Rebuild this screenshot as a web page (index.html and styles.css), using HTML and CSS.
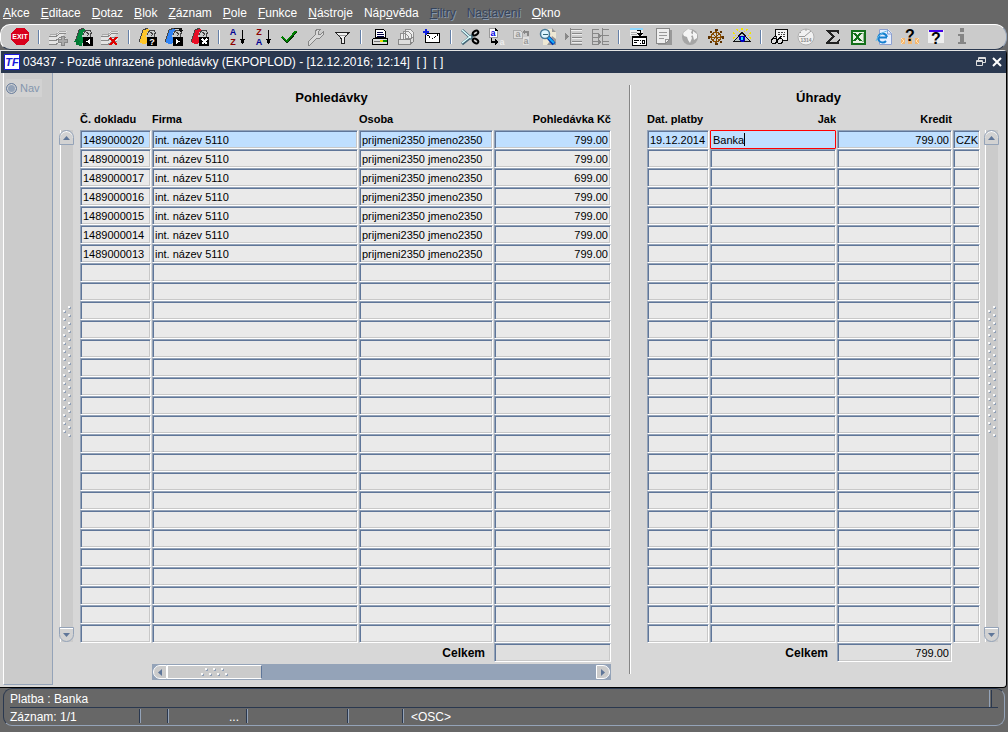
FILE: index.html
```html
<!DOCTYPE html>
<html lang="cs">
<head>
    <meta charset="UTF-8">
    <meta name="viewport" content="width=device-width, initial-scale=1.0">
    <title>03437 - Pozdě uhrazené pohledávky</title>
    <link rel="stylesheet" href="styles.css">
</head>
<body>

    <!-- Shared drawing parts -->
    <svg class="defs" aria-hidden="true">
        <defs>
            <pattern id="dotsV" width="8" height="8" patternUnits="userSpaceOnUse">
                <path fill="#f8f8f8" d="M5 0h2v2h-2zM0 4h2v2h-2z"/>
                <path fill="#8f9fb6" d="M7 1h1v2h-2v-1h1zM2 5h1v2h-2v-1h1z"/>
            </pattern>
            <pattern id="dotsH" width="8" height="8" patternUnits="userSpaceOnUse">
                <path fill="#f8f8f8" d="M4 0h2v2h-2zM0 5h2v2h-2z"/>
                <path fill="#8f9fb6" d="M6 1h1v2h-2v-1h1zM2 6h1v2h-2v-1h1z"/>
            </pattern>
            <symbol id="card" viewBox="0 0 20 20">
                <path d="M1 15L5 3L10 1L12 4L10 9V16L5 17z" fill="currentColor"/>
                <path d="M1 15L5 3L10 1" fill="none" stroke="#444"/>
                <path d="M10 4L12 2L17 2L18 5L17 10H8z" fill="#c9cccc"/>
                <path d="M9 8l3-5h4l2 4M12 5l3 2l-2 2M16 6l1 4" fill="none" stroke="#444"/>
                <path d="M9 10h10v9H9z" fill="#000"/>
            </symbol>
            <symbol id="sheets" viewBox="0 0 20 20">
                <path d="M1 9L7 7L11 4H19L13 10L19 12L12 17H1z" fill="#e4e4e4"/>
                <path d="M1 9.500H8L12 6.500H18M1 13.500H8L12 10.500H18M1 17.500H8L12 14.500H17" fill="none" stroke="#888"/>
                <path d="M2 7.500H8L12 4.500H18" fill="none" stroke="#aaa"/>
            </symbol>
        </defs>
    </svg>

    <nav class="menubar">
        <button><u>A</u>kce</button>
        <button><u>E</u>ditace</button>
        <button><u>D</u>otaz</button>
        <button><u>B</u>lok</button>
        <button><u>Z</u>áznam</button>
        <button><u>P</u>ole</button>
        <button><u>F</u>unkce</button>
        <button><u>N</u>ástroje</button>
        <button>Náp<u>o</u>věda</button>
        <button disabled><u>F</u>iltry</button>
        <button disabled>Na<u>s</u>tavení</button>
        <button><u>O</u>kno</button>
    </nav>

    <div class="toolbar">
        <button aria-label="Exit">
            <svg viewBox="0 0 20 20"><path d="M6 1H14L19 6V13L14 18H6L1 13V6z" fill="#d8001c"/><text x="10" y="12" class="exit-text">EXIT</text></svg>
        </button>
        <span class="sep"></span>
        <button aria-label="Nový záznam">
            <svg viewBox="0 0 20 20"><use href="#sheets"/><path d="M13 9h3v3h3v3h-3v3h-3v-3h-3v-3h3z" fill="#aaa" stroke="#888"/></svg>
        </button>
        <button aria-label="Předchozí">
            <svg viewBox="0 0 20 20" class="green"><use href="#card"/><path d="M2 18v-3h-2l3-4l3 4h-1v2h3v2z" fill="#073"/><path d="M16 12v5l-4-2.500z" fill="#fff"/></svg>
        </button>
        <button aria-label="Smazat záznam">
            <svg viewBox="0 0 20 20"><use href="#sheets"/><path d="M10 11l7 7M17 10l-7 8" stroke="#e00000" stroke-width="2"/></svg>
        </button>
        <span class="sep"></span>
        <button aria-label="Zadat dotaz">
            <svg viewBox="0 0 20 20" class="yellow"><use href="#card"/><text x="14" y="18" class="mark">?</text></svg>
        </button>
        <button aria-label="Provést dotaz">
            <svg viewBox="0 0 20 20" class="blue"><use href="#card"/><path d="M10 1h8v2h1l-2 3l-3-3h1v-1h-5z" fill="#111"/><path d="M12 12v5l4-2.500z" fill="#fff"/></svg>
        </button>
        <button aria-label="Zrušit dotaz">
            <svg viewBox="0 0 20 20" class="red"><use href="#card"/><path d="M12 12l5 5M17 12l-5 5" stroke="#fff" stroke-width="1.500"/></svg>
        </button>
        <span class="sep"></span>
        <button aria-label="Seřadit vzestupně">
            <svg viewBox="0 0 20 20"><text x="5" y="8" class="letter navy">A</text><text x="5" y="18" class="letter maroon">Z</text><path d="M14 3h1v9h2l-2 5h-1l-2-5h2z"/></svg>
        </button>
        <button aria-label="Seřadit sestupně">
            <svg viewBox="0 0 20 20"><text x="5" y="8" class="letter maroon">Z</text><text x="5" y="18" class="letter navy">A</text><path d="M14 3h1v9h2l-2 5h-1l-2-5h2z"/></svg>
        </button>
        <button aria-label="Potvrdit">
            <svg viewBox="0 0 20 20"><path d="M2 10l5 5L16 4" fill="none" stroke="#008000" stroke-width="2.500"/><path d="M3 12l4 4L17 5" fill="none" stroke="#053005"/></svg>
        </button>
        <button aria-label="Nastavení" disabled>
            <svg viewBox="0 0 20 20"><path d="M2 15l7-7V4l3-2h3l-3 3v2l2 1l3-3v3l-3 3h-3l-7 7h-2z" fill="#d8d8d8" stroke="#858585"/></svg>
        </button>
        <button aria-label="Filtr">
            <svg viewBox="0 0 20 20"><path d="M4 5.500h13l-5 6v5h-3v-5z" fill="#eee" stroke="#222"/><path d="M7 8h7" stroke="#999"/></svg>
        </button>
        <span class="sep"></span>
        <button aria-label="Tisk">
            <svg viewBox="0 0 20 20"><path d="M5.500 2.500h8l2 2v6h-10z" fill="#fff" stroke="#000"/><path d="M7 5.500h6M7 7.500h7M7 9.500h7" stroke="#004"/><path d="M3.500 11.500h14v6h-15v-5z" fill="#ddd" stroke="#000"/><path d="M3 17.500h15" stroke="#000"/><path d="M4 14h6v1H4z" fill="#777"/><path d="M10 13h3v2h-3z" fill="#ed0"/><path d="M13 13h4v2h-4z" fill="#080"/></svg>
        </button>
        <button aria-label="Tisk více" disabled>
            <svg viewBox="0 0 20 20"><path d="M9.500 2.500h5l3 3v6h-8zM7.500 4.500h5l3 3v6h-8zM4.500 6.500h5l3 3v5h-8z" fill="#eee" stroke="#909090"/><path d="M2.500 12.500h12v5h-12zM14 12l3-2v5l-3 2" fill="#ddd" stroke="#888"/></svg>
        </button>
        <button aria-label="Poslat zprávu">
            <svg viewBox="0 0 20 20"><path d="M3.500 6.500h14v9h-14z" fill="#fff" stroke="#000"/><path d="M4 7l6 5l7-5" fill="none" stroke="#000" stroke-dasharray="1 1"/><path d="M3 2h2v2h2v2H5v2H3V6H1V4h2z" fill="#1020e0"/></svg>
        </button>
        <span class="sep"></span>
        <button aria-label="Vyjmout">
            <svg viewBox="0 0 20 20" class="smooth"><path d="M2 3l10 9M2 17l11-9" stroke="#467" stroke-width="3"/><path d="M2 3l9 8M2 16l9-7" stroke="#dff" stroke-width="1.500"/><ellipse cx="15.500" cy="6" rx="3" ry="2" transform="rotate(-35 15.500 6)" fill="#ccc" stroke="#000" stroke-width="2"/><ellipse cx="15.500" cy="14" rx="3" ry="2" transform="rotate(35 15.500 14)" fill="#ccc" stroke="#000" stroke-width="2"/></svg>
        </button>
        <button aria-label="Kopírovat">
            <svg viewBox="0 0 20 20"><path d="M3.500 1.500h6l2 2v7h-8z" fill="#fff" stroke="#999"/><path d="M9 1v3h3z"/><text x="7" y="9" class="small blue-text">a</text><path d="M5 11h1v3h3v-2l3 3l-3 3v-2H5z"/><text x="16" y="18" class="small pale-text">a</text></svg>
        </button>
        <button aria-label="Vložit" disabled>
            <svg viewBox="0 0 20 20"><path d="M1.500 3.500h7l2 2v6h-9z" fill="#ddd" stroke="#aaa"/><text x="6" y="10" class="small gray-text">a</text><path d="M10 5l3-3v2h4v5h-2V6h-2v2z" fill="#888"/><path d="M11 10h6v8h-6z" fill="#e0e0e0"/><text x="14" y="17" class="small gray-text">a</text></svg>
        </button>
        <button aria-label="Hledat">
            <svg viewBox="0 0 20 20" class="smooth"><path d="M5 2h10l3 3v13H5z" fill="#eee8d4"/><path d="M14 1v4h4zM14 9l4 3v6H9l3-4z" fill="#999"/><path d="M10 10l6 7" stroke="#0038b0" stroke-width="4"/><path d="M10 10l6 6" stroke="#19aef8" stroke-width="2"/><circle cx="7" cy="7" r="4.500" fill="#def6ff" stroke="#487a98" stroke-width="1.500"/><path d="M5 7.500h5" stroke="#367"/></svg>
        </button>
        <button aria-label="Seznam" disabled>
            <svg viewBox="0 0 20 20"><path d="M6 2.500h12M8 6.500h10M8 10.500h10M8 14.500h10M6 17.500h12" stroke="#888"/><path d="M6 3.500h12M8 7.500h10M8 11.500h10M8 15.500h10" stroke="#eee"/><path d="M6.500 1v17" stroke="#888"/><path d="M1 6v7l4-3.500z" fill="#888"/></svg>
        </button>
        <button aria-label="Detail" disabled>
            <svg viewBox="0 0 20 20"><path d="M2 2.500h7M2 6.500h7M2 10.500h7M2 14.500h7M2 17.500h7M13 2.500h6M11 8.500h8M12 14.500h7M13 17.500h6M2.500 2v16M12.500 1v17" stroke="#888"/><path d="M8 6v6l4-3zM8 12v6l4-3z" fill="#888"/></svg>
        </button>
        <span class="sep"></span>
        <button aria-label="Formulář">
            <svg viewBox="0 0 20 20"><path d="M2 2h13v7H2z" fill="#eee"/><path d="M2 2h13" stroke="#8bd7ff" stroke-width="2"/><path d="M3 5.500h6M3 7.500h6" stroke="#aaa"/><path d="M9 3.500h3v4" fill="none" stroke="#000"/><path d="M9 6h6l-3 4z"/><path d="M4.500 9.500h14v9h-14z" fill="#fff" stroke="#000"/><path d="M5 10.500h13M6 13.500h5M6 15.500h3M12 13.500h1M12 16.500h1" stroke="#000"/><path d="M14.500 13.500h2v3h-2z" fill="none" stroke="#000"/></svg>
        </button>
        <button aria-label="Poznámka" disabled>
            <svg viewBox="0 0 20 20"><path d="M3.500 2.500h14v15h-14z" fill="#999"/><path d="M2.500 1.500h13v11l-4 4h-9z" fill="#eee" stroke="#888"/><path d="M11 16v-4h4M5 5.500h8M5 8.500h8M5 11.500h5" fill="none" stroke="#999"/></svg>
        </button>
        <button aria-label="Web" disabled>
            <svg viewBox="0 0 20 20" class="smooth"><circle cx="10" cy="10" r="8" fill="#a5a5a5"/><path d="M4 5l4-3l4 1l-1 3l3 2l-3 1l1 2l-2 5l-2-3l-1-3l-3-1l-1-2zM13 4l4 3v4l-3 2l-1-4z" fill="#f4f4f4"/></svg>
        </button>
        <button aria-label="Navigace">
            <svg viewBox="0 0 20 20"><circle cx="10" cy="10" r="5" fill="none" stroke="#854b00" stroke-width="1.500"/><path d="M10.500 2v16M2 10.500h16M5 5l10 10M15 5L5 15" stroke="#854b00"/><path d="M9 3h3M9 17h3M3 9v3M17 9v3M4 5h2M14 5h2M4 15h2M14 15h2" stroke="#5e3200" stroke-width="2"/></svg>
        </button>
        <button aria-label="Náhled">
            <svg viewBox="0 0 20 20"><path d="M10 1v3M5 2l2 3M15 2l-2 3M1 6l3 2M19 6l-3 2M1 11l3-1M19 11l-3-1" stroke="#f3e600" stroke-width="1.500" stroke-dasharray="2 1"/><path d="M1.500 14.500L10 5.500l8.500 9z" fill="#b8c8c8" stroke="#111"/><path d="M7 9h6v4l-2 2H9l-2-2z" fill="#0000c0"/><path d="M9 10h2v3H9z" fill="#19dfff"/></svg>
        </button>
        <span class="sep"></span>
        <button aria-label="Zobrazit">
            <svg viewBox="0 0 20 20"><path d="M5.500 2.500h12v11h-11v-4h-1z" fill="#f4f4f4" stroke="#111"/><path d="M8 5.500h7M8 7.500h4M13 7.500h3M10 9.500h5" stroke="#444" stroke-dasharray="2 1"/><circle cx="4" cy="14" r="2.500" fill="#ddd" stroke="#000"/><circle cx="10" cy="14" r="2.500" fill="#ddd" stroke="#000"/><path d="M2 12l4-4M9 11l3-2" stroke="#000"/></svg>
        </button>
        <button aria-label="Čas" disabled>
            <svg viewBox="0 0 20 20" class="smooth"><circle cx="10" cy="10" r="8" fill="#f1f1f1" stroke="#b0b0b0"/><path d="M9 9l6-5M3 9.500h6M10 2v2M4 5l1 1" stroke="#999"/><text x="10" y="15" class="clock-text">1314</text></svg>
        </button>
        <button aria-label="Součet">
            <svg viewBox="0 0 20 20"><path d="M4 3h13v4h-1l-1-2H8l5 5l-6 5h8l2-3h1l-1 5H4v-2l6-6l-6-5z" fill="#222"/></svg>
        </button>
        <button aria-label="Excel">
            <svg viewBox="0 0 20 20"><path d="M3.500 3.500h13v13h-13z" fill="#e9f1e5" stroke="#14701b" stroke-width="2"/><path d="M6 6l7 8M13 6l-7 8" stroke="#14701b" stroke-width="2"/><path d="M14 6h1v8h-1" fill="none" stroke="#91b991"/></svg>
        </button>
        <button aria-label="Prohlížeč">
            <svg viewBox="0 0 20 20" class="smooth"><path d="M5 2h9l4 4v12H5z" fill="#e7efff"/><path d="M5.500 2.500h8l4 4v11h-12zM13.500 2v5h4" fill="none" stroke="#8ca0d0"/><path d="M13 10a4.500 4.500 0 1 0-1 4M4 10.500h9" fill="none" stroke="#1680cf" stroke-width="2"/><path d="M2 14C4 8 10 4 14 4" fill="none" stroke="#65bce9"/></svg>
        </button>
        <button aria-label="Kontextová nápověda">
            <svg viewBox="0 0 20 20"><path d="M1 11h4v6H1zM8 11h4v6H8zM15 11h4v6h-4z" fill="#f5b76f"/><path d="M1 11l3 3l-3 3M19 11l-3 3l3 3" fill="none" stroke="#ffe5bd"/><text x="10" y="14" class="question">?</text></svg>
        </button>
        <button aria-label="Nápověda">
            <svg viewBox="0 0 20 20"><path d="M2 3h16v13H2z" fill="#eee"/><path d="M3 3h14v2H3z" fill="#4000e8"/><text x="10" y="17" class="question">?</text></svg>
        </button>
        <button aria-label="Informace" disabled>
            <svg viewBox="0 0 20 20"><path d="M8 1h4v4H8zM6 7h6v8h2v2H6v-2h2V9H6z" fill="#858585"/></svg>
        </button>
    </div>

    <main class="window">
        <header class="titlebar">
            <svg class="logo" viewBox="0 0 18 18" aria-hidden="true"><path d="M1.500 1.500h15v15h-15z" fill="#fff" stroke="#1717dc"/><text x="9" y="13">TF</text></svg>
            <h1>03437 - Pozdě uhrazené pohledávky (EKPOPLOD) - [12.12.2016; 12:14]&nbsp; [ ]&nbsp; [ ]</h1>
            <button aria-label="Obnovit"><svg viewBox="0 0 12 12"><path d="M3.500 4V1.500h7v5H8M3 2.500h8M1.500 4.500h6v5h-6zM1 5.500h7" fill="none" stroke="#ddd"/></svg></button>
            <button aria-label="Zavřít"><svg viewBox="0 0 12 12"><path d="M2 2l8 8M10 2l-8 8" stroke="#fff" stroke-width="2"/></svg></button>
        </header>

        <div class="workspace">
            <aside class="side">
                <label><input type="radio" name="nav" disabled>Nav</label>
            </aside>

            <div class="canvas">
                <section class="block claims">
                    <h2>Pohledávky</h2>
                    <div class="scroll-v">
                        <button aria-label="Nahoru"><svg viewBox="0 0 7 4"><path d="M0 4L3.500 0L7 4z"/></svg></button>
                        <svg class="grip"><rect width="8" height="132" fill="url(#dotsV)"/></svg>
                        <button aria-label="Dolů"><svg viewBox="0 0 7 4"><path d="M0 0L3.500 4L7 0z"/></svg></button>
                    </div>
                    <table>
                        <colgroup><col class="w-doc"><col><col class="w-person"><col class="w-claim"></colgroup>
                        <thead>
                            <tr><th>Č. dokladu</th><th>Firma</th><th>Osoba</th><th class="num">Pohledávka Kč</th></tr>
                        </thead>
                        <tbody id="claims"></tbody>
                        <tfoot>
                            <tr>
                                <td colspan="3"><label for="claimTotal">Celkem</label></td>
                                <td><input class="num" id="claimTotal" readonly></td>
                            </tr>
                        </tfoot>
                    </table>
                    <div class="scroll-h">
                        <button class="prev" aria-label="Vlevo"><svg viewBox="0 0 4 7"><path d="M4 0L0 3.500L4 7z"/></svg></button>
                        <div class="thumb"><svg><rect width="28" height="8" fill="url(#dotsH)"/></svg></div>
                        <button class="next" aria-label="Vpravo"><svg viewBox="0 0 4 7"><path d="M0 0L4 3.500L0 7z"/></svg></button>
                    </div>
                </section>

                <div class="divider"></div>

                <section class="block payments">
                    <h2>Úhrady</h2>
                    <div class="scroll-v">
                        <button aria-label="Nahoru"><svg viewBox="0 0 7 4"><path d="M0 4L3.500 0L7 4z"/></svg></button>
                        <svg class="grip"><rect width="8" height="132" fill="url(#dotsV)"/></svg>
                        <button aria-label="Dolů"><svg viewBox="0 0 7 4"><path d="M0 0L3.500 4L7 0z"/></svg></button>
                    </div>
                    <table>
                        <colgroup><col class="w-date"><col class="w-how"><col class="w-credit"><col class="w-cur"></colgroup>
                        <thead>
                            <tr><th>Dat. platby</th><th class="num">Jak</th><th class="num">Kredit</th><th></th></tr>
                        </thead>
                        <tbody id="payments"></tbody>
                        <tfoot>
                            <tr>
                                <td colspan="2"><label for="creditTotal">Celkem</label></td>
                                <td><input class="num" id="creditTotal" value="799.00" readonly></td>
                                <td></td>
                            </tr>
                        </tfoot>
                    </table>
                </section>
            </div>
        </div>
    </main>

    <footer class="status">
        <div class="hint">Platba : Banka</div>
        <div class="cells">
            <span class="c-record">Záznam: 1/1</span>
            <span class="c-small"></span>
            <span class="c-dots">...</span>
            <span class="c-mid"></span>
            <span class="c-list"></span>
            <span class="c-osc">&lt;OSC&gt;</span>
        </div>
    </footer>

    <script>
        const ROWS = 27;
        const firm = "int. název 5110";
        const person = "prijmeni2350 jmeno2350";

        const claims = [
            ["1489000020", firm, person, "799.00"],
            ["1489000019", firm, person, "799.00"],
            ["1489000017", firm, person, "699.00"],
            ["1489000016", firm, person, "799.00"],
            ["1489000015", firm, person, "799.00"],
            ["1489000014", firm, person, "799.00"],
            ["1489000013", firm, person, "799.00"]
        ];

        const payments = [
            ["19.12.2014", "Banka", "799.00", "CZK"]
        ];

        function fillTable(id, data, labels, numCol) {
            const body = document.getElementById(id);
            for (let r = 0; r < ROWS; r++) {
                const tr = body.insertRow();
                if (r === 0) tr.className = "current";
                labels.forEach((label, c) => {
                    const input = document.createElement("input");
                    input.value = data[r] ? data[r][c] : "";
                    input.setAttribute("aria-label", label + " " + (r + 1));
                    if (c === numCol) input.className = "num";
                    tr.insertCell().appendChild(input);
                });
            }
        }

        fillTable("claims", claims, ["Č. dokladu", "Firma", "Osoba", "Pohledávka Kč"], 3);
        fillTable("payments", payments, ["Dat. platby", "Jak", "Kredit", "Měna"], 2);

        // aktivni pole
        const active = document.getElementById("payments").rows[0].cells[1];
        active.className = "active";
        active.insertAdjacentHTML("beforeend", '<span class="caret"></span>');
    </script>
</body>
</html>
```

FILE: styles.css
```css
* {
    box-sizing: border-box;
}

body {
    margin: 0;
    min-height: 100vh;
    background: #676767;
    color: #000;
    font-family: "Liberation Sans", Arial, sans-serif;
    font-size: 11px;
}

button {
    margin: 0;
    padding: 0;
    border: none;
    background: none;
    font: inherit;
    color: inherit;
}

svg {
    display: block;
}

.defs {
    position: absolute;
    width: 0;
    height: 0;
}

/* Menu */
.menubar {
    display: flex;
    gap: 11px;
    height: 24px;
    padding: 2px 3px 0;
    color: #fff;
    font-size: 12px;
}

.menubar button:disabled {
    color: #35445c;
    text-shadow: 1px 1px 0 #8797ad;
}

/* Toolbar */
.toolbar {
    display: flex;
    align-items: center;
    height: 26px;
    margin: 0 1px 0 0;
    padding: 0 6px;
    background: #cbcbcb;
    border: 1px solid #fff;
    border-right-color: #94a3b8;
    border-bottom-color: #2a384f;
    border-radius: 10px 12px 12px 10px;
}

.toolbar button {
    width: 26px;
    padding: 0 3px;
}

.toolbar svg {
    width: 20px;
    height: 20px;
    shape-rendering: crispEdges;
}

.toolbar .smooth {
    shape-rendering: auto;
}

.toolbar text {
    text-anchor: middle;
    font-weight: bold;
}

.sep {
    width: 2px;
    height: 14px;
    margin: 0 5px;
    border-left: 1px solid #6580a8;
    border-right: 1px solid #fff;
}

.exit-text {
    font-size: 7px;
    fill: #fff;
}

.mark {
    font-size: 9px;
    fill: #fff;
}

.letter {
    font-size: 9px;
}

.small {
    font-size: 9px;
}

.clock-text {
    font-size: 5px;
    fill: #888;
}

.question {
    font-size: 16px;
}

.navy { fill: #000090; }
.maroon { fill: #8c0000; }
.blue-text { fill: #0000e0; }
.gray-text { fill: #999; }
.pale-text { fill: #eee; }
.green { color: #00873c; }
.yellow { color: #ffc629; }
.blue { color: #2f83f5; }
.red { color: #e80d25; }

/* Window */
.window {
    margin-right: 1px;
    background: #d7d7d7;
    border-top: 1px solid #e4e4e4;
    border-bottom: 1px solid #000;
    border-right: 1px solid #000;
    border-radius: 0 4px 4px 0;
}

.titlebar {
    display: flex;
    align-items: center;
    gap: 4px;
    height: 22px;
    margin-left: 1px;
    padding: 0 3px 0 2px;
    background: #2a384f;
    color: #fff;
}

.titlebar h1 {
    flex: 1;
    margin: 0 0 0 -2px;
    font-size: 12px;
    font-weight: normal;
}

.titlebar button svg {
    width: 12px;
    height: 12px;
}

.logo {
    width: 18px;
    height: 18px;
}

.logo text {
    text-anchor: middle;
    font-size: 11px;
    font-weight: bold;
    font-style: italic;
    fill: #1717dc;
}

.workspace {
    display: flex;
    padding-left: 3px;
}

.side {
    width: 50px;
    margin-bottom: 2px;
    background: #cbcbcb;
    border-left: 1px solid #fff;
    border-right: 1px solid #94a3b8;
    border-bottom: 1px solid #94a3b8;
}

.side label {
    display: flex;
    align-items: center;
    gap: 3px;
    width: 36px;
    height: 18px;
    margin: 6px 0 0 2px;
    background: #d2d2d2;
    color: #8496ae;
}

.side input {
    appearance: none;
    width: 11px;
    height: 11px;
    margin: 0;
    background: #94a3b8;
    border: 1px solid #6b7f9d;
    border-radius: 50%;
    box-shadow: inset 0 0 0 1px #d7d7d7;
}

.canvas {
    flex: 1;
    display: flex;
    align-items: stretch;
    padding: 12px 7px 7px 6px;
}

.block {
    display: grid;
    grid-template-rows: 23px auto auto;
    align-content: start;
}

.claims {
    flex: 1;
    grid-template-columns: 21px 1fr;
}

.payments {
    grid-template-columns: 333px 4px 15px;
}

.block h2 {
    margin: 0;
    font-size: 13px;
    line-height: 26px;
    text-align: center;
}

.claims h2 {
    grid-column: 2;
    padding-right: 28px;
}

.payments h2 {
    grid-column: 1;
    padding-left: 10px;
}

.divider {
    width: 2px;
    margin: 0 16px 6px 18px;
    border-left: 1px solid #858585;
    border-right: 1px solid #fff;
}

/* Tables */
table {
    width: 100%;
    table-layout: fixed;
    border-collapse: collapse;
}

.claims table {
    grid-area: 2 / 2;
}

.payments table {
    grid-area: 2 / 1;
}

.w-doc { width: 72px; }
.w-person { width: 135px; }
.w-claim { width: 117px; }
.w-date { width: 63px; }
.w-how { width: 127px; }
.w-credit { width: 116px; }
.w-cur { width: 27px; }

th {
    height: 22px;
    padding: 0;
    text-align: left;
    white-space: nowrap;
}

.payments th {
    padding-right: 1px;
}

td {
    height: 19px;
    padding: 0 1px 0 0;
}

td:last-child {
    padding-right: 0;
}

td input {
    display: block;
    width: 100%;
    height: 19px;
    padding: 1px 0 0 2px;
    background: #eaeaea;
    border: 1px solid #fff;
    border-top-color: #94a3b8;
    border-left-color: #94a3b8;
    border-radius: 1px;
    box-shadow: inset 1px 1px 0 #5f7699, inset -1px -1px 0 #c8c8c8;
    color: #000;
    font: inherit;
    outline: none;
}

.num {
    text-align: right;
}

td .num {
    padding-right: 2px;
}

.current input {
    background: #bfdfff;
}

.active {
    position: relative;
}

.active input {
    border-color: #f00;
    box-shadow: none;
}

.caret {
    position: absolute;
    top: 3px;
    left: 34px;
    width: 1px;
    height: 13px;
    background: #000;
}

tfoot label {
    display: block;
    padding-right: 8px;
    font-size: 12px;
    font-weight: bold;
    text-align: right;
}

tfoot input {
    background: #dfdfdf;
}

/* Scrollbars */
.scroll-v {
    display: flex;
    flex-direction: column;
    align-items: center;
    justify-content: space-between;
    width: 15px;
    margin: 22px 0 20px;
    background: linear-gradient(to right, transparent 1px, #fff 1px, #fff 2px, #cbcbcb 2px, #cbcbcb 14px, transparent 14px);
}

.claims .scroll-v {
    grid-area: 2 / 1;
}

.payments .scroll-v {
    grid-area: 2 / 3;
}

.scroll-v button {
    display: flex;
    align-items: center;
    justify-content: center;
    width: 15px;
    height: 15px;
    background: #d2d2d2;
    border: 1px solid #94a3b8;
    border-radius: 8px 8px 0 0;
    box-shadow: inset 0 1px 0 #fff;
}

.scroll-v button:last-child {
    border-radius: 0 0 8px 8px;
}

.scroll-v button svg {
    width: 7px;
    height: 4px;
    fill: #5f7699;
}

.grip {
    width: 8px;
    height: 132px;
    margin-bottom: 28px;
}

.scroll-h {
    grid-column: 2;
    display: flex;
    height: 16px;
    margin: 2px 0 0 72px;
    padding: 1px;
    background: #94a3b8;
}

.scroll-h button {
    display: flex;
    align-items: center;
    justify-content: center;
    width: 14px;
    background: #cbcbcb;
    border: 1px solid #fff;
}

.scroll-h button svg {
    width: 4px;
    height: 7px;
    fill: #5f7699;
}

.scroll-h .prev {
    border-radius: 7px 0 0 7px;
}

.scroll-h .next {
    margin-left: auto;
    border-radius: 0 7px 7px 0;
}

.thumb {
    display: flex;
    align-items: center;
    justify-content: center;
    width: 95px;
    background: #cbcbcb;
    border: 1px solid #fff;
    border-right-color: #5f7699;
}

.thumb svg {
    width: 28px;
    height: 8px;
}

/* Status */
.status {
    margin: 0 3px;
    height: 38px;
    padding: 1px 6px 0;
    border: 1px solid #94a3b8;
    border-top-color: #2a384f;
    border-left-color: #2a384f;
    border-radius: 9px;
    color: #fff;
    font-size: 12px;
}

.hint {
    height: 18px;
    line-height: 18px;
    border-bottom: 1px solid #2a384f;
    background: linear-gradient(#2a384f, #2a384f) right 6px top / 1px 100% no-repeat, linear-gradient(#94a3b8, #94a3b8) right 8px top / 1px 100% no-repeat;
}

.cells {
    display: flex;
    height: 17px;
    line-height: 17px;
}

.cells span {
    height: 14px;
    margin-top: 1px;
    line-height: 16px;
    border-right: 1px solid #94a3b8;
    box-shadow: inset -1px 0 0 #2a384f;
}

.c-record { width: 131px; }
.c-small { width: 28px; }

.c-dots {
    width: 79px;
    padding-right: 8px;
    text-align: right;
}

.c-mid { width: 101px; }
.c-list { width: 55px; }

.cells .c-osc {
    padding-left: 7px;
    border: none;
    box-shadow: none;
}
```
